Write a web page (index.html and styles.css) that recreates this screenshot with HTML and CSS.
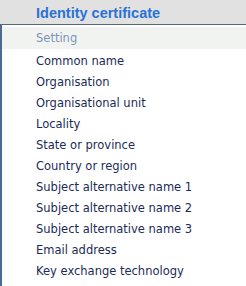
FILE: index.html
```html
<!DOCTYPE html>
<html>
<head>
<meta charset="utf-8">
<link rel="stylesheet" href="styles.css">
</head>
<body>
<div class="panel">
  <div class="header">Identity certificate</div>
  <div class="body">
    <div class="setting">Setting</div>
    <div class="list">
      <div class="row">Common name</div>
      <div class="row">Organisation</div>
      <div class="row">Organisational unit</div>
      <div class="row">Locality</div>
      <div class="row">State or province</div>
      <div class="row">Country or region</div>
      <div class="row">Subject alternative name 1</div>
      <div class="row">Subject alternative name 2</div>
      <div class="row">Subject alternative name 3</div>
      <div class="row">Email address</div>
      <div class="row">Key exchange technology</div>
    </div>
  </div>
</div>
</body>
</html>
```
FILE: styles.css
```css
html, body {
  margin: 0;
  padding: 0;
  background: #ffffff;
}
.panel {
  width: 246px;
  height: 286px;
  font-family: "DejaVu Sans", Verdana, sans-serif;
  font-size: 11.5px;
}
.header {
  height: 24px;
  line-height: 26px;
  background: #e1e1e1;
  border-bottom: 1px solid #56697c;
  padding-left: 36px;
  color: #2a72d4;
  font-weight: bold;
  font-size: 14.5px;
  font-family: "Liberation Sans", Arial, sans-serif;
}
.body {
  border-left: 2px solid #4d6b8a;
  padding-top: 2px;
  height: 259px;
}
.setting {
  background: #f1f3f1;
  height: 22px;
  line-height: 22px;
  padding-left: 34px;
  color: #7e94b9;
}
.list {
  padding-top: 2px;
}
.row {
  height: 21px;
  line-height: 21px;
  padding-left: 34px;
  color: #1b2b55;
  white-space: nowrap;
}
```
